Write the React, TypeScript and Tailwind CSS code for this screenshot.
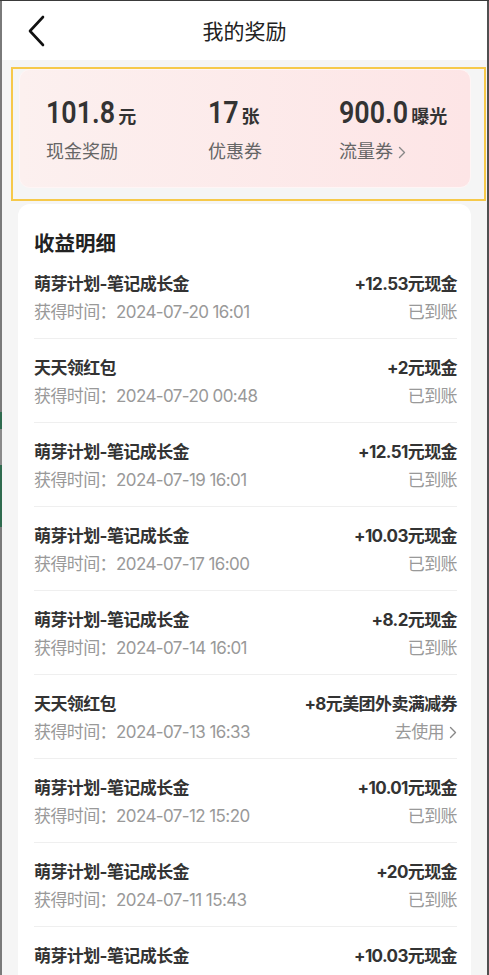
import React from "react";

const CJK = '"Inter", "Noto Sans CJK SC", sans-serif';
const NUM = '"Roboto", "Liberation Sans", sans-serif';

type Item = { title: string; time: string; amount: string; status: string; link?: boolean };

const items: Item[] = [
  { title: "萌芽计划-笔记成长金", time: "2024-07-20 16:01", amount: "+12.53元现金", status: "已到账" },
  { title: "天天领红包", time: "2024-07-20 00:48", amount: "+2元现金", status: "已到账" },
  { title: "萌芽计划-笔记成长金", time: "2024-07-19 16:01", amount: "+12.51元现金", status: "已到账" },
  { title: "萌芽计划-笔记成长金", time: "2024-07-17 16:00", amount: "+10.03元现金", status: "已到账" },
  { title: "萌芽计划-笔记成长金", time: "2024-07-14 16:01", amount: "+8.2元现金", status: "已到账" },
  { title: "天天领红包", time: "2024-07-13 16:33", amount: "+8元美团外卖满减券", status: "去使用", link: true },
  { title: "萌芽计划-笔记成长金", time: "2024-07-12 15:20", amount: "+10.01元现金", status: "已到账" },
  { title: "萌芽计划-笔记成长金", time: "2024-07-11 15:43", amount: "+20元现金", status: "已到账" },
  { title: "萌芽计划-笔记成长金", time: "2024-07-10 16:01", amount: "+10.03元现金", status: "已到账" },
];

function SmallChevron() {
  return (
    <svg width="8" height="13" viewBox="0 0 8 13" className="ml-[5px]">
      <path d="M1.5 1.5 L6.5 6.5 L1.5 11.5" fill="none" stroke="#888" strokeWidth="1.4" strokeLinecap="round" strokeLinejoin="round" />
    </svg>
  );
}

function Stat({ num, unit, label, link, w, squeeze }: { num: string; unit: string; label: string; link?: boolean; w: string; squeeze: string }) {
  return (
    <div className={`flex flex-col ${w}`}>
      <div className="flex items-baseline h-[32px] leading-[32px] text-[#333] whitespace-nowrap">
        <span className={`inline-block origin-left scale-x-[0.84] text-[32px] font-semibold ${squeeze}`} style={{ fontFamily: NUM }}>{num}</span>
        <span className="ml-[3px] text-[18px] font-bold" style={{ fontFamily: CJK }}>{unit}</span>
      </div>
      <div className="mt-[12px] flex items-center h-[24px] leading-[24px] text-[18px] text-[#666]">
        <span>{label}</span>
        {link && <SmallChevron />}
      </div>
    </div>
  );
}

export default function App() {
  return (
    <div className="w-[489px] h-[975px] overflow-hidden flex flex-col border-t border-[#3a3a3a]" style={{ fontFamily: CJK }}>
      <div className="flex flex-1 min-h-0">
        <div className="w-[2px] flex flex-col bg-[#7a7a7a]">
          <div className="h-[411px]" />
          <div className="h-[17px] bg-[#2f6b4f]" />
          <div className="h-[36px] bg-[#8a8a8a]" />
          <div className="h-[62px] bg-[#2f6b4f]" />
        </div>
        <div className="flex-1 min-w-0 flex flex-col bg-[#f5f5f5]">
          {/* header */}
          <div className="h-[59px] shrink-0 bg-white relative flex items-center justify-center">
            <svg width="20" height="32" viewBox="0 0 20 32" className="absolute left-[25px] top-[14px]">
              <path d="M16 2 L3 16 L16 30" fill="none" stroke="#111" strokeWidth="2.6" strokeLinecap="round" strokeLinejoin="round" />
            </svg>
            <span className="text-[21px] text-[#222] leading-[28px] mt-[2px]">我的奖励</span>
          </div>

          {/* highlighted stats */}
          <div className="mt-[7px] ml-[9px] mr-[1px] border-2 border-[#f6c94a] pl-[6px] pr-[13px] pb-[11px] shrink-0">
            <div className="rounded-[11px] bg-gradient-to-r from-[#fcf0ef] to-[#fde5e6] border border-[#fff5f5] pl-[26px] pt-[26px] pb-[23px] flex">
              <Stat num="101.8" unit="元" label="现金奖励" w="w-[162px]" squeeze="mr-[-13px]" />
              <Stat num="17" unit="张" label="优惠券" w="w-[131px]" squeeze="mr-[-6px]" />
              <Stat num="900.0" unit="曝光" label="流量券" link w="flex-1" squeeze="mr-[-13px]" />
            </div>
          </div>

          {/* list card */}
          <div className="mt-[3px] ml-[16px] w-[453px] bg-white rounded-[12px] pt-[29px] pl-4 pr-[14px] flex-1 tracking-[-0.6px]">
            <div className="text-[20.5px] font-bold leading-[22px] text-[#222] tracking-normal">收益明细</div>
            {items.map((it, i) => (
              <div key={i} className="pt-[17px] pb-[14px] border-b border-[#efefef]">
                <div className="flex justify-between leading-[24px] h-[24px] text-[17px] font-bold text-[#333]">
                  <span>{it.title}</span>
                  <span>{it.amount}</span>
                </div>
                <div className="mt-[4px] flex justify-between leading-[24px] h-[24px] text-[17px] text-[#999]">
                  <span>获得时间：{it.time}</span>
                  <span className="flex items-center">
                    {it.status}
                    {it.link && <SmallChevron />}
                  </span>
                </div>
              </div>
            ))}
          </div>
        </div>
        <div className="w-[2px] bg-[#505050]" />
      </div>
    </div>
  );
}
